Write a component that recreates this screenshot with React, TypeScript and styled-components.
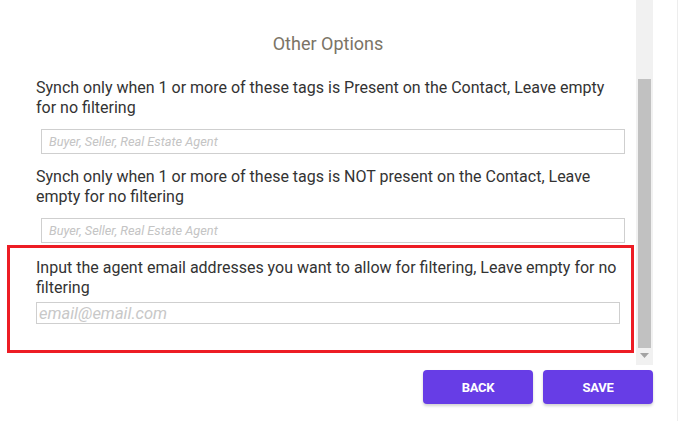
import React, { FC } from 'react'
import styled, { createGlobalStyle } from 'styled-components'

const GlobalStyle = createGlobalStyle`
  html, body {
    margin: 0;
    padding: 0;
    background: #ffffff;
  }
  body {
    font-family: Roboto, 'Liberation Sans', Arial, sans-serif;
  }
  * {
    box-sizing: border-box;
  }
`

type FieldProps = {
  label: string
  placeholder: string
}

const TagField: FC<FieldProps> = ({ label, placeholder }) => (
  <Group>
    <Label>{label}</Label>
    <TagInput placeholder={placeholder} />
  </Group>
)

const App: FC = () => (
  <>
    <GlobalStyle />
    <Modal>
      <ScrollArea>
        <Content>
          <Title>Other Options</Title>
          <TagField
            label="Synch only when 1 or more of these tags is Present on the Contact, Leave empty for no filtering"
            placeholder="Buyer, Seller, Real Estate Agent"
          />
          <TagField
            label="Synch only when 1 or more of these tags is NOT present on the Contact, Leave empty for no filtering"
            placeholder="Buyer, Seller, Real Estate Agent"
          />
          <Highlight>
            <Label>
              Input the agent email addresses you want to allow for filtering, Leave empty for no
              filtering
            </Label>
            <EmailInput placeholder="email@email.com" />
          </Highlight>
        </Content>
        <Track>
          <Thumb />
          <Arrow>
            <svg width="9" height="5" viewBox="0 0 9 5">
              <path d="M0 0 H9 L4.5 5 Z" fill="#a3a3a3" />
            </svg>
          </Arrow>
        </Track>
      </ScrollArea>
      <Footer>
        <Button>Back</Button>
        <Button>Save</Button>
      </Footer>
    </Modal>
  </>
)

export default App

const Modal = styled.div`
  width: 678px;
  height: 421px;
  border-right: 1px solid #ededed;
  background: #ffffff;
  display: flex;
  flex-direction: column;
`
const ScrollArea = styled.div`
  display: flex;
  height: 365px;
  overflow: hidden;
`
const Content = styled.div`
  width: 636px;
  flex-shrink: 0;
`
const Title = styled.h3`
  margin: 33px 0 0 20px;
  height: 22px;
  line-height: 22px;
  text-align: center;
  font-size: 18px;
  font-weight: 400;
  color: #7b7466;
`
const Group = styled.div`
  padding: 0 12px 0 36px;
  margin-top: 23px;

  & + & {
    margin-top: 13px;
  }
`
const Label = styled.p`
  margin: 0;
  font-size: 16px;
  line-height: 20px;
  color: #333333;
`
const TagInput = styled.input`
  display: block;
  margin: 11px 0 0 5px;
  width: 584px;
  height: 25px;
  padding: 0 7px;
  border: 1px solid #cfcfcf;
  border-radius: 0;
  outline: none;
  font-family: Roboto, 'Liberation Sans', Arial, sans-serif;
  font-size: 12.75px;
  font-style: italic;
  color: #333333;

  &::placeholder {
    color: #c4c4c4;
  }
`
const Highlight = styled.div`
  margin: 2px 2px 0 7px;
  border: 3px solid #ed1c24;
  padding: 10px 11px 26px 26px;
`
const EmailInput = styled.input`
  display: block;
  margin-top: 4px;
  width: 584px;
  height: 22px;
  padding: 0 2px;
  border: 1px solid #cfcfcf;
  border-radius: 0;
  outline: none;
  font-family: Roboto, 'Liberation Sans', Arial, sans-serif;
  font-size: 16.5px;
  font-style: italic;
  color: #333333;

  &::placeholder {
    color: #c8c8c8;
  }
`
const Track = styled.div`
  width: 17px;
  height: 365px;
  background: #f1f1f1;
  display: flex;
  flex-direction: column;
  align-items: center;
`
const Thumb = styled.div`
  width: 13px;
  height: 269px;
  margin-top: 79px;
  background: #c1c1c1;
`
const Arrow = styled.div`
  margin-top: 5px;
  display: flex;
`
const Footer = styled.div`
  display: flex;
  justify-content: flex-end;
  gap: 10px;
  padding: 5px 24px 0 0;
`
const Button = styled.button`
  width: 110px;
  height: 34px;
  border: none;
  border-radius: 4px;
  background: #673de6;
  color: #ffffff;
  font-family: Roboto, 'Liberation Sans', Arial, sans-serif;
  font-size: 13px;
  font-weight: 700;
  letter-spacing: -0.3px;
  text-transform: uppercase;
  box-shadow: 0 2px 3px rgba(0, 0, 0, 0.18);
  cursor: pointer;
`
